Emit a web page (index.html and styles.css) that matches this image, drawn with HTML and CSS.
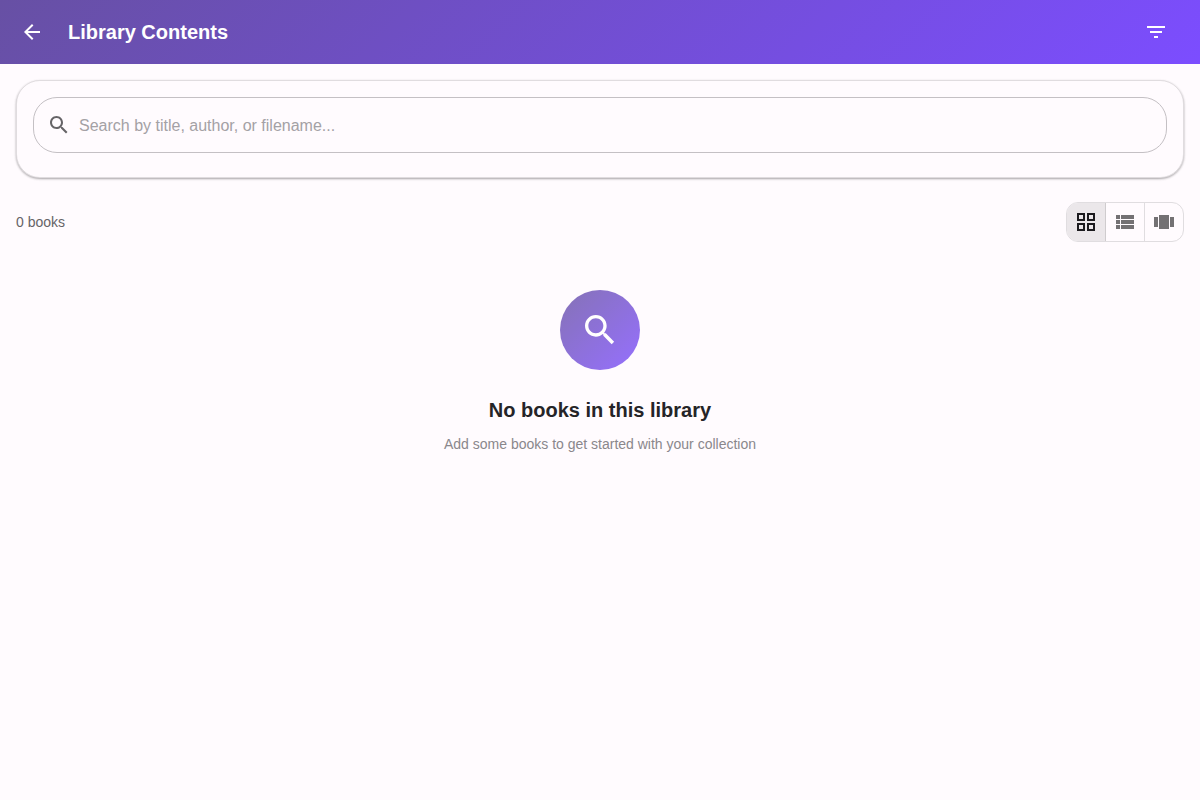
FILE: index.html
```html
<!DOCTYPE html>
<html lang="en">
<head>
<meta charset="utf-8">
<meta name="viewport" content="width=device-width, initial-scale=1">
<title>Library Contents</title>
<link rel="stylesheet" href="styles.css">
</head>
<body>
<header class="app-bar">
  <button class="icon-button" type="button" aria-label="Back">
    <svg class="icon" viewBox="0 0 24 24"><path d="M20 11H7.83l5.59-5.59L12 4l-8 8 8 8 1.41-1.41L7.83 13H20v-2z"/></svg>
  </button>
  <h1 class="app-title">Library Contents</h1>
  <button class="icon-button" type="button" aria-label="Filter">
    <svg class="icon" viewBox="0 0 24 24"><path d="M10 18h4v-2h-4v2zM3 6v2h18V6H3zm3 7h12v-2H6v2z"/></svg>
  </button>
</header>
<main class="content">
  <section class="search-card">
    <label class="search-field">
      <svg class="icon" viewBox="0 0 24 24" aria-hidden="true"><path d="M15.5 14h-.79l-.28-.27C15.41 12.59 16 11.11 16 9.5 16 5.91 13.09 3 9.5 3S3 5.91 3 9.5 5.91 16 9.5 16c1.61 0 3.09-.59 4.23-1.57l.27.28v.79l5 4.99L20.49 19l-4.99-5zm-6 0C7.01 14 5 11.99 5 9.5S7.01 5 9.5 5 14 7.01 14 9.5 11.99 14 9.5 14z"/></svg>
      <input class="search-input" type="text" aria-label="Search books" placeholder="Search by title, author, or filename...">
    </label>
  </section>
  <div class="toolbar">
    <p class="count">0 books</p>
    <div class="view-toggle" role="group" aria-label="View mode">
      <button class="view-button selected" type="button" aria-label="Grid view" aria-pressed="true">
        <svg class="icon" viewBox="0 0 24 24"><path fill-rule="evenodd" d="M3 3v8h8V3H3zm6 6H5V5h4v4zm-6 4v8h8v-8H3zm6 6H5v-4h4v4zm4-16v8h8V3h-8zm6 6h-4V5h4v4zm-6 4v8h8v-8h-8zm6 6h-4v-4h4v4z"/></svg>
      </button>
      <button class="view-button" type="button" aria-label="List view" aria-pressed="false">
        <svg class="icon" viewBox="0 0 24 24"><path d="M3 14h4v-4H3v4zm0 5h4v-4H3v4zM3 9h4V5H3v4zm5 5h13v-4H8v4zm0 5h13v-4H8v4zM8 5v4h13V5H8z"/></svg>
      </button>
      <button class="view-button" type="button" aria-label="Carousel view" aria-pressed="false">
        <svg class="icon" viewBox="0 0 24 24"><path d="M7 19h10V5H7v14zm-5-2h4V7H2v10zM18 7v10h4V7h-4z"/></svg>
      </button>
    </div>
  </div>
  <section class="empty">
    <div class="empty-badge">
      <svg class="icon" viewBox="0 0 24 24" aria-hidden="true"><path d="M15.5 14h-.79l-.28-.27C15.41 12.59 16 11.11 16 9.5 16 5.91 13.09 3 9.5 3S3 5.91 3 9.5 5.91 16 9.5 16c1.61 0 3.09-.59 4.23-1.57l.27.28v.79l5 4.99L20.49 19l-4.99-5zm-6 0C7.01 14 5 11.99 5 9.5S7.01 5 9.5 5 14 7.01 14 9.5 11.99 14 9.5 14z"/></svg>
    </div>
    <h2 class="empty-title">No books in this library</h2>
    <p class="empty-text">Add some books to get started with your collection</p>
  </section>
</main>
</body>
</html>
```
FILE: styles.css
```css
* {
  box-sizing: border-box;
}

body {
  margin: 0;
  min-height: 100vh;
  background: #fffbfe;
  color: #252427;
  font-family: "Liberation Sans", Arial, sans-serif;
}

h1,
h2,
p {
  margin: 0;
}

button {
  padding: 0;
  border: 0;
  background: transparent;
  color: inherit;
  cursor: pointer;
}

.icon {
  display: block;
  flex-shrink: 0;
  width: 24px;
  height: 24px;
  fill: currentColor;
}

.app-bar {
  display: flex;
  align-items: center;
  height: 64px;
  padding: 0 24px 0 12px;
  background: linear-gradient(135deg, #6750a4 0%, #7c4dff 100%);
  color: #fff;
}

.icon-button {
  display: grid;
  place-items: center;
  width: 40px;
  height: 40px;
  border-radius: 50%;
}

.app-title {
  flex: 1;
  margin-left: 16px;
  font-size: 20px;
  line-height: 32px;
  font-weight: 700;
}

.content {
  padding: 16px;
}

.search-card {
  padding: 16px 16px 24px;
  border: 1px solid rgba(0, 0, 0, 0.12);
  border-radius: 24px;
  box-shadow: 0 1px 3px rgba(0, 0, 0, 0.12), 0 1px 2px rgba(0, 0, 0, 0.24);
}

.search-field {
  display: flex;
  align-items: center;
  gap: 8px;
  height: 56px;
  padding: 0 13px;
  border: 1px solid #c4c0c4;
  border-radius: 24px;
  color: #666467;
}

.search-input {
  flex: 1;
  min-width: 0;
  padding: 2px 0 0;
  border: 0;
  outline: 0;
  background: transparent;
  color: #252427;
  font: 16px/24px "Liberation Sans", Arial, sans-serif;
}

.search-input::placeholder {
  color: #a4a1a5;
  opacity: 1;
}

.toolbar {
  display: flex;
  align-items: center;
  justify-content: space-between;
  margin-top: 24px;
}

.count {
  color: #666467;
  font-size: 14px;
  line-height: 20px;
}

.view-toggle {
  display: flex;
  overflow: hidden;
  border: 1px solid #e0dde0;
  border-radius: 12px;
}

.view-button {
  display: grid;
  place-items: center;
  width: 39px;
  height: 38px;
  color: #737173;
}

.view-button + .view-button {
  border-left: 1px solid #e0dde0;
}

.view-button.selected {
  width: 38px;
  background: #ebe7ea;
  color: #1c1b1f;
}

.view-button.selected + .view-button {
  border-left-color: #cfccce;
}

.empty {
  display: flex;
  flex-direction: column;
  align-items: center;
  padding: 48px 16px;
  text-align: center;
}

.empty-badge {
  display: grid;
  place-items: center;
  width: 80px;
  height: 80px;
  border-radius: 50%;
  background: linear-gradient(135deg, #6750a4 0%, #7c4dff 100%);
  color: #fff;
  opacity: 0.8;
}

.empty-badge .icon {
  width: 40px;
  height: 40px;
}

.empty-title {
  margin-top: 24px;
  font-size: 20px;
  line-height: 32px;
  font-weight: 700;
}

.empty-text {
  margin-top: 8px;
  color: #8a878c;
  font-size: 14px;
  line-height: 20px;
}
```
